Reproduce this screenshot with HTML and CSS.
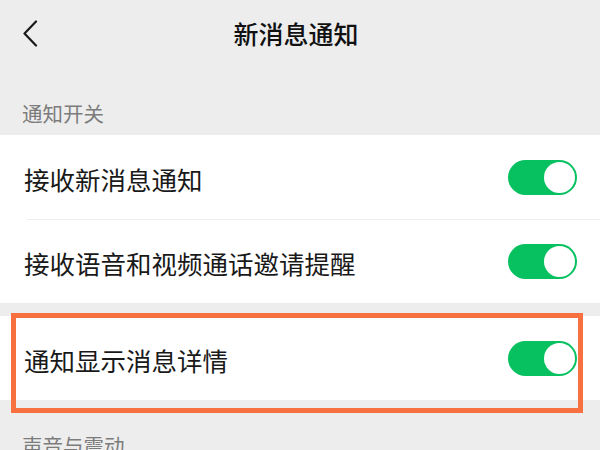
FILE: index.html
```html
<!DOCTYPE html>
<html lang="zh-CN">
<head>
<meta charset="utf-8">
<title>新消息通知</title>
<link rel="stylesheet" href="styles.css">
</head>
<body>
<div class="page">
  <header class="nav">
    <span class="back">
      <svg width="16" height="27" viewBox="0 0 16 27"><polyline points="14,1.5 2.5,13.5 14,25.5" fill="none" stroke="#1a1a1a" stroke-width="2.2" stroke-linecap="round" stroke-linejoin="round"/></svg>
    </span>
    <h1 class="title">新消息通知</h1>
    <span class="nav-spacer"></span>
  </header>

  <div class="section-label">通知开关</div>
  <div class="group">
    <div class="row">
      <span class="row-text">接收新消息通知</span>
      <span class="switch"><span class="knob"></span></span>
    </div>
    <div class="divider"></div>
    <div class="row row-short">
      <span class="row-text">接收语音和视频通话邀请提醒</span>
      <span class="switch"><span class="knob"></span></span>
    </div>
  </div>

  <div class="group group-gap highlight-wrap">
    <div class="row">
      <span class="row-text">通知显示消息详情</span>
      <span class="switch"><span class="knob"></span></span>
    </div>
    <div class="highlight"></div>
  </div>

  <div class="section-label section-label-2">声音与震动</div>
</div>
</body>
</html>
```

FILE: styles.css
```css
* { box-sizing: border-box; }
html, body {
  margin: 0;
  padding: 0;
  background: #ededed;
}
body {
  font-family: "Noto Sans CJK SC", "Noto Sans", sans-serif;
  color: #191919;
  width: 600px;
  height: 450px;
  overflow: hidden;
}
.page {
  width: 600px;
}
.nav {
  height: 66px;
  display: flex;
  align-items: center;
  padding: 0 0 0 22px;
}
.back {
  display: flex;
  width: 18px;
}
.title {
  flex: 1;
  margin: 0;
  text-align: center;
  font-size: 25px;
  font-weight: 500;
  color: #111;
  padding-right: 48px;
}
.nav-spacer { width: 0; }
.section-label {
  font-size: 20.5px;
  line-height: 28px;
  color: #7c7c7c;
  padding: 33px 22px 8px;
}
.section-label-2 {
  padding-top: 31px;
}
.group {
  background: #fff;
}
.group-gap {
  margin-top: 13px;
}
.row {
  height: 84px;
  display: flex;
  align-items: center;
  justify-content: space-between;
  padding: 0 23px 0 24px;
}
.row-short { height: 83px; }
.row-text {
  font-size: 25.5px;
  line-height: 30px;
  margin-top: 3px;
}
.divider {
  height: 1px;
  margin-left: 27px;
  background: #ededed;
}
.switch {
  width: 69px;
  height: 35px;
  border-radius: 18px;
  background: #07c160;
  display: flex;
  justify-content: flex-end;
  align-items: center;
  padding: 2px;
}
.knob {
  width: 31px;
  height: 31px;
  border-radius: 50%;
  background: #fff;
}
.highlight-wrap {
  position: relative;
}
.highlight {
  position: absolute;
  left: 11px;
  right: 17px;
  top: -3px;
  bottom: -13px;
  border: 5px solid #f87040;
  pointer-events: none;
}
```
